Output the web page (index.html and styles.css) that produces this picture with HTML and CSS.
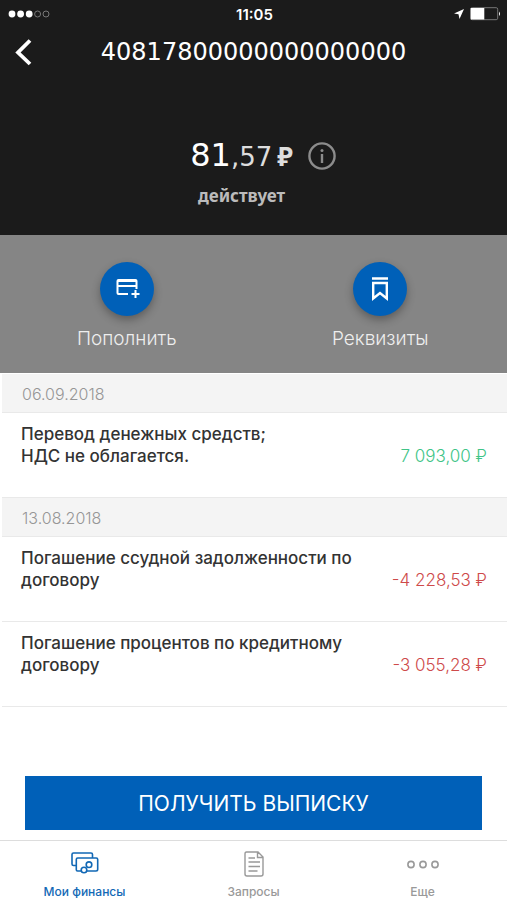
FILE: index.html
```html
<!DOCTYPE html>
<html lang="ru">
<head>
<meta charset="utf-8">
<meta name="viewport" content="width=device-width, initial-scale=1">
<title>Счёт</title>
<link rel="stylesheet" href="styles.css">
</head>
<body>
<div class="app">
  <header class="header">
    <div class="status">
      <svg class="signal" width="42" height="10" viewBox="0 0 42 10"><g fill="#fff"><circle cx="4" cy="5" r="3.4"/><circle cx="12.6" cy="5" r="3.4"/><circle cx="21.2" cy="5" r="3.4"/></g><g fill="none" stroke="#777"><circle cx="29.6" cy="5" r="3"/><circle cx="38" cy="5" r="3"/></g></svg>
      <time class="clock">11:05</time>
      <div class="status-end">
        <svg width="12" height="12" viewBox="0 0 12 12"><path d="M11 1 1 5.5l4.5.7L6.5 11z" fill="#fff"/></svg>
        <svg width="31" height="14" viewBox="0 0 31 14"><rect x=".7" y=".7" width="27" height="12" rx="1.5" fill="none" stroke="#777"/><path d="M.7 1h13.6v11.500H.7z" fill="#fff"/><path d="M29 4.500q2 2.300 0 4.600z" fill="#fff"/></svg>
      </div>
    </div>
    <div class="title-bar">
      <button class="back" type="button" aria-label="Назад"><svg width="18" height="28" viewBox="0 0 18 28"><path d="M16 2.500 4 14.500l12 11.500" fill="none" stroke="#fff" stroke-width="3.800"/></svg></button>
      <h1 class="account">40817800000000000000</h1>
    </div>
    <div class="balance">
      <span class="rub">81</span><span class="kop">,57</span><span class="currency">₽</span>
      <button class="info" type="button" aria-label="Информация"><svg width="28" height="28" viewBox="0 0 28 28"><circle cx="14" cy="14" r="12.600" fill="none" stroke="#8c8c8c" stroke-width="2.400"/><path d="M14 12v9" stroke="#8c8c8c" stroke-width="2.400"/><circle cx="14" cy="8.600" r="1.500" fill="#8c8c8c"/></svg></button>
    </div>
    <p class="state">действует</p>
  </header>

  <section class="actions">
    <button class="action" type="button">
      <span class="disc"><svg width="26" height="26" viewBox="0 0 26 26" fill="none" stroke="#fff" stroke-width="2"><path d="M14 18H4.500q-1 0-1-1V5q0-1 1-1h17q1 0 1 1v8M3.500 10h19M3.500 5h19"/><path d="M21.500 14v8M17.500 18h8"/></svg></span>
      <span class="action-label">Пополнить</span>
    </button>
    <button class="action" type="button">
      <span class="disc"><svg width="26" height="26" viewBox="0 0 26 26" fill="none" stroke="#fff" stroke-width="2.400"><path d="M5 2.500h16M6.200 7h13.600v15.500L13 17l-6.800 5.500z"/></svg></span>
      <span class="action-label">Реквизиты</span>
    </button>
  </section>

  <main class="history">
    <h2 class="date">06.09.2018</h2>
    <article class="entry"><p class="purpose">Перевод денежных средств;<br>НДС не облагается.</p><p class="sum income">7 093,00 ₽</p></article>
    <h2 class="date">13.08.2018</h2>
    <article class="entry"><p class="purpose">Погашение ссудной задолженности по договору</p><p class="sum">-4 228,53 ₽</p></article>
    <article class="entry"><p class="purpose">Погашение процентов по кредитному договору</p><p class="sum">-3 055,28 ₽</p></article>
  </main>

  <div class="footer">
    <button class="statement" type="button">ПОЛУЧИТЬ ВЫПИСКУ</button>
  </div>
  <nav class="tabs">
    <a class="tab current" href="#finance"><svg width="28" height="26" viewBox="0 0 28 26" fill="none" stroke="currentColor" stroke-width="1.600"><path d="M5.300 14.500H2.500Q1 14.500 1 13V3.500Q1 2 2.500 2H20q1.500 0 1.500 1.500V7"/><path d="M10.200 20H6.500q-1.200 0-1.200-1.200V8.400Q5.300 7 6.700 7h18.500q1.500 0 1.500 1.500v9.800q0 1.700-1.700 1.700h-9.200"/><circle cx="18" cy="13.700" r="2.800"/><circle cx="13" cy="19" r="2.800"/></svg><span>Мои финансы</span></a>
    <a class="tab" href="#requests"><svg width="28" height="26" viewBox="0 0 28 26" fill="none" stroke="currentColor" stroke-width="1.400"><path d="M6.500 1H18l5 5v17q0 2-2 2H7q-2 0-2-2V3q0-2 1.500-2zM17.500 1v5.500H23M8.500 7H15M8.500 11H20M8.500 15.500H20M8.500 20h9"/></svg><span>Запросы</span></a>
    <a class="tab" href="#more"><svg width="34" height="26" viewBox="0 0 34 26" fill="none" stroke="currentColor" stroke-width="1.600"><circle cx="5" cy="13.500" r="3.100"/><circle cx="17" cy="13.500" r="3.100"/><circle cx="29" cy="13.500" r="3.100"/></svg><span>Еще</span></a>
  </nav>
</div>
</body>
</html>
```
FILE: styles.css
```css
* { box-sizing: border-box; }
body { margin: 0; background: #fff; font-family: Inter, "Liberation Sans", sans-serif; }
h1, h2, p { margin: 0; font-weight: 400; }
button { border: 0; padding: 0; background: none; font: inherit; color: inherit; cursor: pointer; }
svg { display: block; }
.app { display: flex; flex-direction: column; min-height: 100vh; }

.header { background: #1b1b1b; color: #fff; padding-bottom: 27px; }
.status { display: grid; grid-template-columns: 1fr auto 1fr; align-items: center; height: 28px; padding: 0 6px 0 8px; }
.clock { font-size: 15px; font-weight: 600; }
.status-end { display: flex; justify-content: flex-end; align-items: center; gap: 5px; }
.title-bar { display: grid; grid-template-columns: 42px 1fr 42px; align-items: center; height: 48px; }
.back { padding-left: 14px; }
.account { font-family: "DejaVu Sans", sans-serif; font-size: 24px; text-align: center; white-space: nowrap; }
.balance { display: flex; justify-content: center; align-items: baseline; margin-top: 56px; height: 48px; padding-left: 19px; font-family: "DejaVu Sans", sans-serif; line-height: 46px; }
.rub { font-size: 32px; }
.kop { font-size: 26px; color: #ddd; }
.currency { margin-left: 5px; font: 700 26px/46px "Noto Sans", sans-serif; color: #ddd; }
.info { align-self: center; margin-left: 15px; }
.state { margin-top: 4px; text-align: center; font: 700 17px/24px "Noto Sans", sans-serif; color: #bbb; padding-right: 24px; }

.actions { display: grid; grid-template-columns: 1fr 1fr; height: 138px; background: #858585; }
.action { display: flex; flex-direction: column; align-items: center; padding-top: 27px; color: #eee; }
.disc { display: grid; place-items: center; width: 54px; height: 54px; border-radius: 50%; background: #0060b8; box-shadow: 0 4px 8px rgba(0, 0, 0, .3); }
.action-label { margin-top: 11px; font-size: 19px; line-height: 24px; font-weight: 300; }

.history { margin-left: 2px; padding-top: 1px; }
.date { height: 39px; padding-left: 20px; border-bottom: 1px solid #e9e9e9; background: #f4f4f4; color: #969696; font-size: 16px; line-height: 40px; font-weight: 300; }
.entry { display: flex; align-items: flex-start; justify-content: space-between; height: 85px; padding: 10px 20px 0 19px; border-bottom: 1px solid #e9e9e9; }
.purpose { max-width: 350px; color: #333; font-size: 17px; line-height: 22px; font-weight: 500; }
.sum { padding-top: 22px; color: #ce4a4a; font-size: 17px; line-height: 22px; font-weight: 300; white-space: nowrap; }
.income { color: #40c487; }

.footer { margin-top: auto; padding: 0 25px 10px; }
.statement { width: 100%; height: 54px; background: #0060b8; color: #fff; font-size: 21px; font-weight: 400; }
.tabs { display: grid; grid-template-columns: repeat(3, 1fr); height: 60px; border-top: 1px solid #ddd; }
.tab { display: flex; flex-direction: column; align-items: center; gap: 7px; padding-top: 10px; color: #999; font-size: 12px; line-height: 16px; font-weight: 500; text-decoration: none; }
.current { color: #1268b5; }
```
